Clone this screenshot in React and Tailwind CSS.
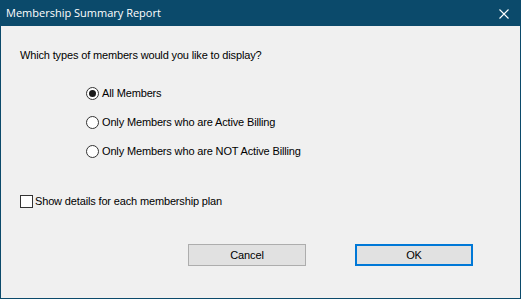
import React, { useState } from 'react';

const Radio = ({ checked, label, onClick }) => (
  <button onClick={onClick} className="flex items-center h-[17px] text-left">
    <span className="w-[13px] h-[13px] rounded-full border border-[#333] bg-white flex items-center justify-center shrink-0">
      {checked && <span className="w-[7px] h-[7px] rounded-full bg-[#1a1a1a]" />}
    </span>
    <span className="ml-[3px]">{label}</span>
  </button>
);

export default function App() {
  const [mode, setMode] = useState('all');
  const [details, setDetails] = useState(false);

  const options = [
    { id: 'all', label: 'All Members' },
    { id: 'active', label: 'Only Members who are Active Billing' },
    { id: 'inactive', label: 'Only Members who are NOT Active Billing' },
  ];

  return (
    <div className="w-[521px] h-[299px] border border-[#0b4a6b] bg-[#f0f0f0] flex flex-col text-[11px] tracking-[-0.15px] text-black" style={{ fontFamily: '"Liberation Sans", Arial, sans-serif' }}>
      {/* Title bar */}
      <div className="h-[25px] bg-[#0b4a6b] flex items-center justify-between pl-[5px] pr-[10px] shrink-0">
        <span className="text-white text-[11px] tracking-normal" style={{ fontFamily: '"Open Sans", "Noto Sans", sans-serif' }}>Membership Summary Report</span>
        <svg width="10" height="10" viewBox="0 0 10 10" className="mr-[1px]">
          <path d="M0.5 0.5 L9.5 9.5 M9.5 0.5 L0.5 9.5" stroke="white" strokeWidth="1.1" />
        </svg>
      </div>

      <div className="flex-1 flex flex-col pl-[19px] pt-[21px]">
        <p className="leading-[17px]">Which types of members would you like to display?</p>

        <div className="flex flex-col gap-[12px] pl-[66px] mt-[21px]">
          {options.map(o => (
            <Radio key={o.id} checked={mode === o.id} label={o.label} onClick={() => setMode(o.id)} />
          ))}
        </div>

        <button onClick={() => setDetails(!details)} className="flex items-center h-[17px] mt-[33px] text-left">
          <span className="w-[13px] h-[13px] border border-[#333] bg-white flex items-center justify-center shrink-0">
            {details && <span className="text-[10px] leading-none">✓</span>}
          </span>
          <span className="ml-[2px]">Show details for each membership plan</span>
        </button>

        <div className="flex mt-[34px] pl-[168px] gap-[49px]">
          <button className="w-[118px] h-[22px] border border-[#adadad] bg-[#e1e1e1]">Cancel</button>
          <button className="w-[118px] h-[22px] border-2 border-[#0078d7] bg-[#e1e1e1]">OK</button>
        </div>
      </div>
    </div>
  );
}
